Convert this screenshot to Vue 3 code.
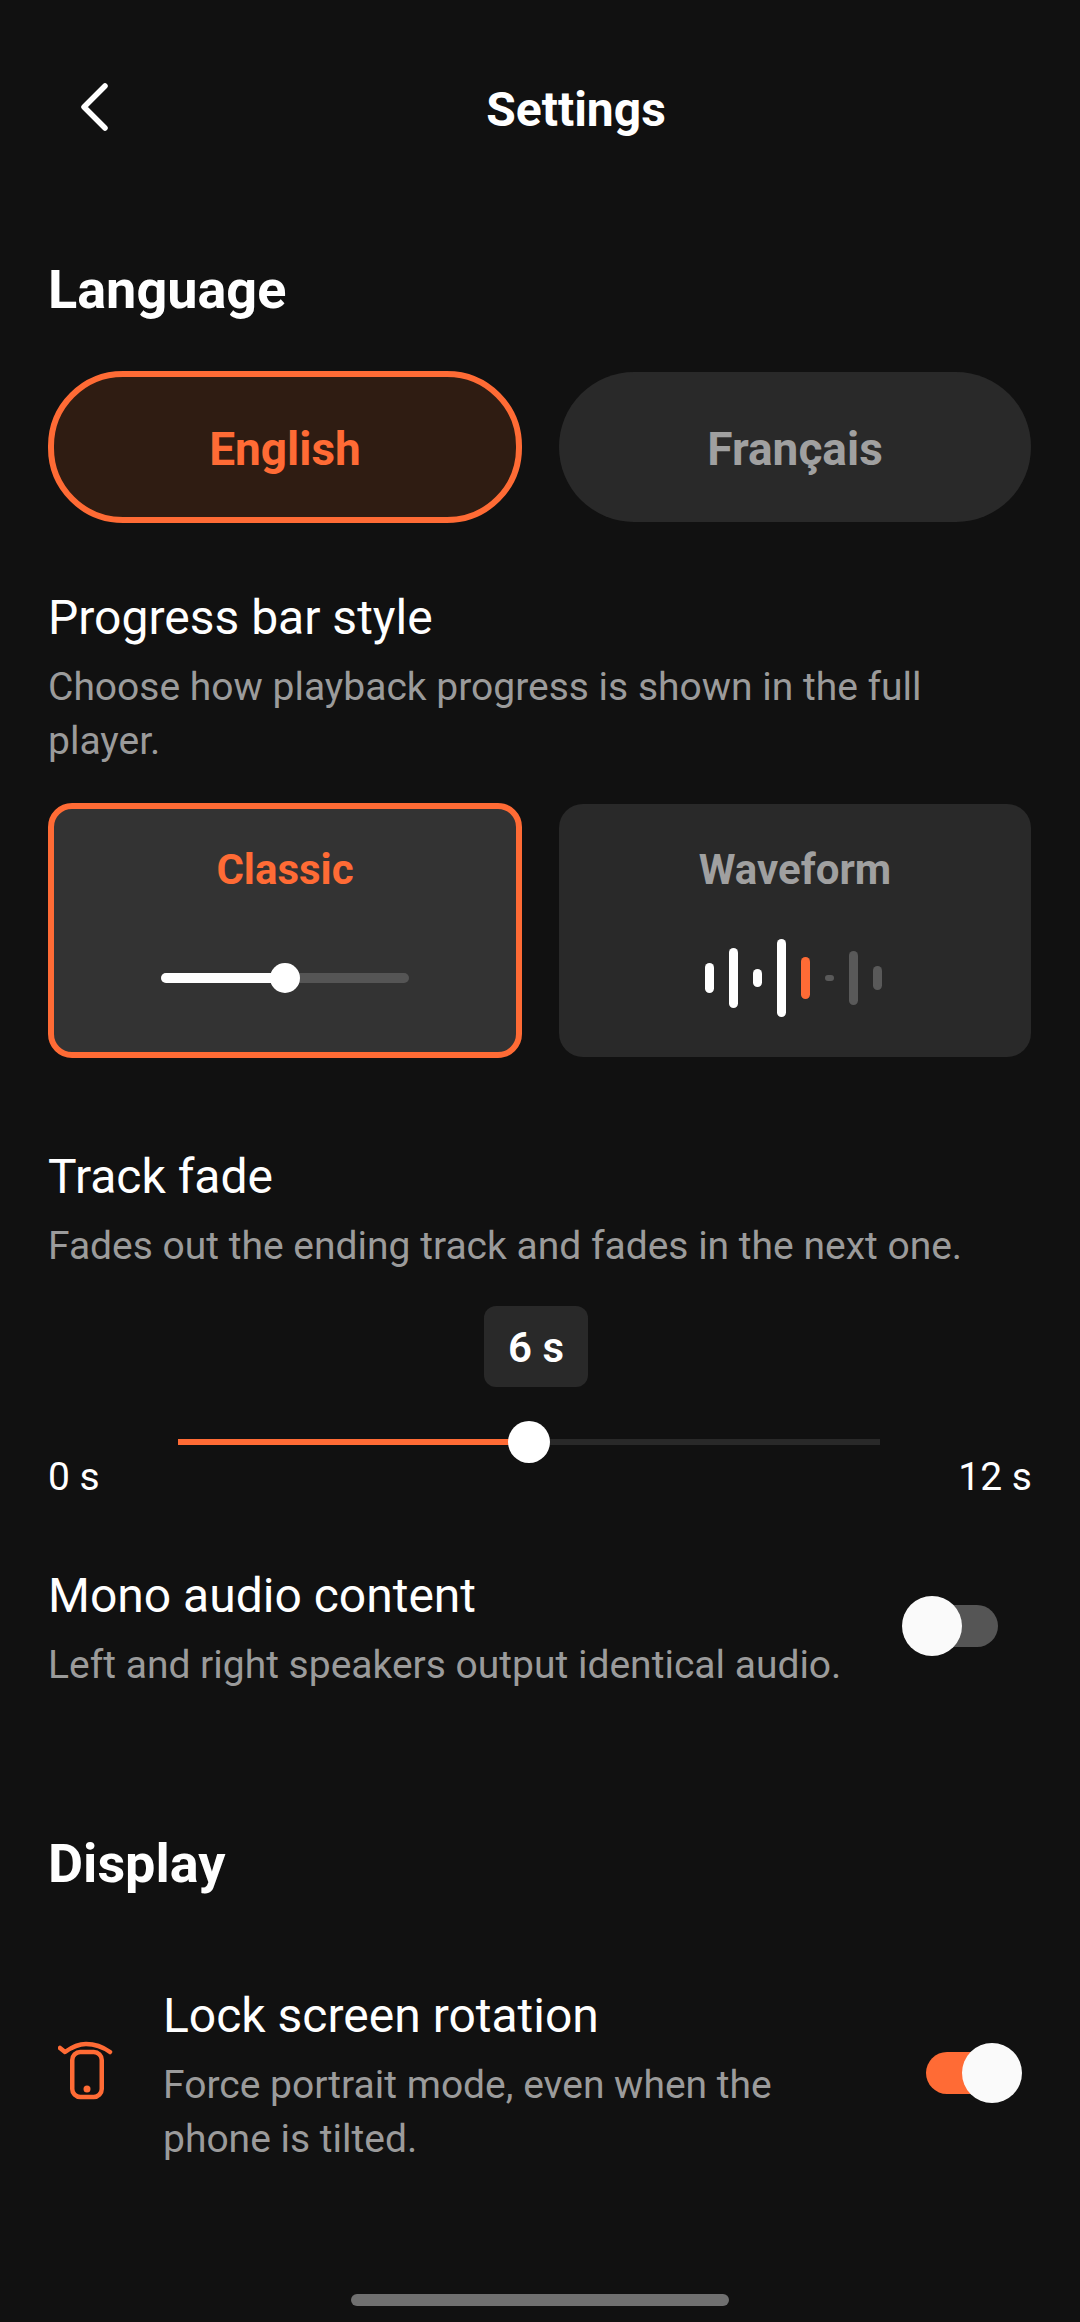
<script setup>
const bars = [
  { h: 30, c: 'done' },
  { h: 60, c: 'done' },
  { h: 18, c: 'done' },
  { h: 78, c: 'done' },
  { h: 42, c: 'now' },
  { h: 6, c: 'todo' },
  { h: 54, c: 'todo' },
  { h: 24, c: 'todo' }
]
</script>

<template>
  <div class="page">
    <header class="top">
      <svg class="back" width="40" height="60" viewBox="0 0 40 60" fill="none" stroke="#fff" stroke-width="5.5" stroke-linecap="round" stroke-linejoin="round">
        <path d="M29 9 L8 30 L29 51" />
      </svg>
      <h1 class="title">Settings</h1>
    </header>

    <h2 class="section first">Language</h2>
    <div class="pair langs">
      <button class="lang active">English</button>
      <button class="lang">Français</button>
    </div>

    <div class="name progress-name">Progress bar style</div>
    <p class="desc">Choose how playback progress is shown in the full player.</p>
    <div class="pair cards">
      <div class="card active">
        <span class="card-label">Classic</span>
        <div class="mini-slider">
          <div class="mini-fill"></div>
          <div class="mini-thumb"></div>
        </div>
      </div>
      <div class="card">
        <span class="card-label">Waveform</span>
        <div class="wave">
          <i v-for="(b, i) in bars" :key="i" :class="b.c" :style="{ height: b.h + 'px' }"></i>
        </div>
      </div>
    </div>

    <div class="name fade-name">Track fade</div>
    <p class="desc">Fades out the ending track and fades in the next one.</p>
    <div class="fade-value">6 s</div>
    <div class="slider">
      <div class="slider-fill"></div>
      <div class="slider-thumb"></div>
    </div>
    <div class="ends">
      <span>0 s</span>
      <span>12 s</span>
    </div>

    <div class="row mono">
      <div class="row-text">
        <div class="name">Mono audio content</div>
        <p class="desc">Left and right speakers output identical audio.</p>
      </div>
      <div class="switch"><span class="knob"></span></div>
    </div>

    <h2 class="section display">Display</h2>
    <div class="row lock">
      <svg class="phone" width="60" height="72" viewBox="0 0 60 72" fill="none" stroke="#ff6b35" stroke-width="4.5" stroke-linecap="round" stroke-linejoin="round">
        <rect x="14.25" y="18" width="29.5" height="45" rx="8" />
        <path d="M2 14 L7 18 C14 13 21 10 28 10 C36 10 45 13 52 18" />
        <circle cx="29" cy="55" r="3.5" fill="#ff6b35" stroke="none" />
      </svg>
      <div class="row-text">
        <div class="name">Lock screen rotation</div>
        <p class="desc">Force portrait mode, even when the phone is tilted.</p>
      </div>
      <div class="switch on"><span class="knob"></span></div>
    </div>

    <div class="home-bar"></div>
  </div>
</template>

<style scoped>
.page {
  position: relative;
  box-sizing: border-box;
  width: 1080px;
  height: 2322px;
  padding: 0 48px;
  display: flex;
  flex-direction: column;
  background: #111111;
  color: #fff;
  font-family: Roboto, "Liberation Sans", sans-serif;
  overflow: hidden;
}

.top {
  position: relative;
  height: 216px;
  flex-shrink: 0;
  display: flex;
  align-items: center;
  justify-content: center;
}

.back {
  position: absolute;
  left: 28px;
  top: 77px;
}

.title {
  margin: 3px 0 0 72px;
  font-size: 48px;
  font-weight: 700;
  line-height: 60px;
}

.section {
  margin: 0;
  font-size: 54px;
  font-weight: 700;
  line-height: 66px;
}

.first {
  margin-top: 41px;
}

.pair {
  display: grid;
  grid-template-columns: 474px 474px;
  column-gap: 36px;
}

.langs {
  margin-top: 48px;
}

.lang {
  margin: 1px;
  padding: 3px 0 0;
  border: none;
  border-radius: 75px;
  background: #292929;
  color: #a0a0a0;
  font-family: inherit;
  font-size: 46px;
  font-weight: 700;
}

.lang.active {
  height: 152px;
  margin: 0;
  border: 6px solid #ff6b35;
  background: #2f1c12;
  color: #ff6b35;
}

.name {
  font-size: 48px;
  line-height: 60px;
  font-weight: 400;
}

.progress-name {
  margin-top: 65px;
}

.desc {
  margin: 12px 0 0;
  color: #9b9b9b;
  font-size: 39px;
  line-height: 54px;
}

.cards {
  margin-top: 35px;
}

.card {
  box-sizing: border-box;
  margin: 1px;
  padding-top: 41px;
  border-radius: 24px;
  background: #292929;
  display: flex;
  flex-direction: column;
  align-items: center;
  color: #a0a0a0;
}

.card.active {
  height: 255px;
  margin: 0;
  border: 6px solid #ff6b35;
  padding-top: 36px;
  background: #333333;
  color: #ff6b35;
}

.card-label {
  font-size: 42px;
  font-weight: 700;
  line-height: 50px;
}

.mini-slider {
  position: relative;
  width: 248px;
  height: 10px;
  margin-top: 78px;
  border-radius: 5px;
  background: #555555;
}

.mini-fill {
  width: 124px;
  height: 100%;
  border-radius: 5px;
  background: #fff;
}

.mini-thumb {
  position: absolute;
  left: 109px;
  top: -10px;
  width: 30px;
  height: 30px;
  border-radius: 50%;
  background: #fff;
}

.wave {
  display: flex;
  align-items: center;
  gap: 15px;
  height: 78px;
  margin: 44px 3px 0 0;
}

.wave i {
  width: 9px;
  border-radius: 5px;
  background: #fff;
}

.wave i.now {
  background: #ff6b35;
}

.wave i.todo {
  background: #595959;
}

.fade-name {
  margin-top: 89px;
}

.fade-value {
  align-self: flex-start;
  box-sizing: border-box;
  width: 104px;
  height: 81px;
  margin: 33px 0 0 436px;
  border-radius: 12px;
  background: #292929;
  font-size: 42px;
  font-weight: 600;
  line-height: 83px;
  text-align: center;
}

.slider {
  position: relative;
  width: 702px;
  height: 6px;
  margin: 52px 0 0 130px;
  background: #292929;
  flex-shrink: 0;
}

.slider-fill {
  width: 351px;
  height: 100%;
  background: #ff6b35;
}

.slider-thumb {
  position: absolute;
  left: 330px;
  top: -18px;
  width: 42px;
  height: 42px;
  border-radius: 50%;
  background: #fff;
}

.ends {
  display: flex;
  justify-content: space-between;
  margin-top: 10px;
  font-size: 39px;
  line-height: 44px;
}

.row {
  display: flex;
  align-items: center;
}

.row-text {
  flex: 1;
  min-width: 0;
}

.mono {
  margin-top: 67px;
}

.switch {
  position: relative;
  width: 72px;
  height: 42px;
  margin: 0 34px 6px 0;
  border-radius: 21px;
  background: #555555;
  flex-shrink: 0;
}

.knob {
  position: absolute;
  left: -24px;
  top: -9px;
  width: 60px;
  height: 60px;
  border-radius: 50%;
  background: #fafafa;
}

.switch.on {
  background: #ff6b35;
}

.switch.on .knob {
  left: 36px;
}

.display {
  margin-top: 139px;
}

.lock {
  margin-top: 89px;
}

.phone {
  flex-shrink: 0;
  margin: 0 45px 12px 10px;
}

.lock .row-text {
  padding-right: 60px;
}

.home-bar {
  position: absolute;
  left: 351px;
  top: 2294px;
  width: 378px;
  height: 12px;
  border-radius: 6px;
  background: #707070;
}
</style>
